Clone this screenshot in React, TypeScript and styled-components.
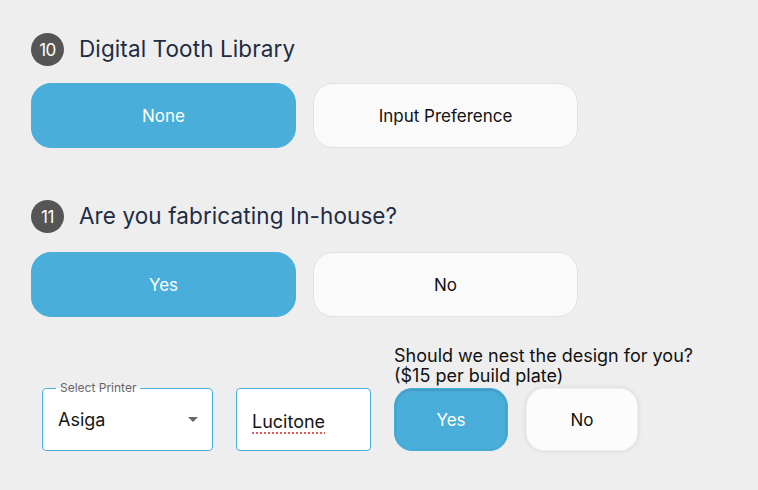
import React from "react";
import styled, { createGlobalStyle } from "styled-components";

const Global = createGlobalStyle`
  html, body { margin: 0; padding: 0; background: #eeeeee; }
  body { font-family: Inter, "Noto Sans", sans-serif; }
  * { box-sizing: border-box; }
`;

const Page = styled.div`
  width: 758px;
  height: 490px;
  background: #eeeeee;
  padding: 33px 0 0 31px;
  display: flex;
  flex-direction: column;
`;

const Section = styled.section<{ $gapTop?: number; $inner: number }>`
  display: flex;
  flex-direction: column;
  gap: ${(p) => p.$inner}px;
  margin-top: ${(p) => p.$gapTop ?? 0}px;
`;

const Heading = styled.div`
  display: flex;
  align-items: center;
  gap: 15px;
  height: 33px;
`;

const Badge = styled.span`
  width: 33px;
  height: 33px;
  border-radius: 50%;
  background: #555555;
  color: #ffffff;
  font-size: 17px;
  display: flex;
  align-items: center;
  justify-content: center;
  letter-spacing: -0.5px;
`;

const Title = styled.h2`
  margin: 0 0 3px;
  font-size: 22.5px;
  font-weight: 400;
  color: #1e2c44;
  letter-spacing: 0.1px;
`;

const Choices = styled.div<{ $gap: number }>`
  display: flex;
  gap: ${(p) => p.$gap}px;
`;

const Choice = styled.button<{ $active?: boolean; $w: number; $h: number; $r: number; $small?: boolean }>`
  width: ${(p) => p.$w}px;
  height: ${(p) => p.$h}px;
  border-radius: ${(p) => p.$r}px;
  font-family: Inter, "Noto Sans", sans-serif;
  font-size: 17px;
  cursor: pointer;
  background: ${(p) => (p.$active ? "#49aed9" : "#fafafa")};
  color: ${(p) => (p.$active ? "#ffffff" : "#111111")};
  border: 1px solid ${(p) => (p.$active ? "#49aed9" : "#e2e2e2")};
  box-shadow: ${(p) =>
    p.$small
      ? p.$active
        ? "inset 0 1px 3px rgba(0,0,0,0.18)"
        : "0 0 5px rgba(0,0,0,0.10)"
      : "none"};
  ${(p) => (p.$small && !p.$active ? "border-color: #f0f0f0; background: #fcfcfc;" : "")}
`;

const BottomRow = styled.div`
  display: flex;
  align-items: flex-end;
  margin-top: 29px;
  padding-left: 11px;
`;

const Field = styled.fieldset<{ $w: number }>`
  margin: 0;
  width: ${(p) => p.$w}px;
  height: 69px;
  border: 1px solid #49aed9;
  border-radius: 4px;
  background: #ffffff;
  padding: 0 14px 0 15px;
  display: flex;
  align-items: center;
  justify-content: space-between;
  min-inline-size: 0;
`;

const Legend = styled.legend`
  font-size: 12px;
  color: #666666;
  padding: 0 4px;
  margin-left: -2px;
  line-height: 12px;
`;

const PlainBox = styled.div<{ $w: number }>`
  width: ${(p) => p.$w}px;
  height: 63px;
  border: 1px solid #49aed9;
  border-radius: 4px;
  background: #ffffff;
  display: flex;
  align-items: center;
  padding: 0 15px;
`;

const Value = styled.span<{ $spell?: boolean }>`
  font-size: 18px;
  color: #151515;
  margin-top: ${(p) => (p.$spell ? 4 : -6)}px;
  ${(p) =>
    p.$spell
      ? "text-decoration: underline dotted #e05a5a; text-underline-offset: 4px; text-decoration-thickness: 2px;"
      : ""}
`;

const Caret = styled.span`
  width: 0;
  height: 0;
  border-left: 5px solid transparent;
  border-right: 5px solid transparent;
  border-top: 5px solid #666666;
  margin-top: -5px;
`;

const Gap = styled.div<{ $w: number }>`
  width: ${(p) => p.$w}px;
  flex: none;
`;

const Nest = styled.div`
  display: flex;
  flex-direction: column;
  gap: 2px;
`;

const Question = styled.p`
  margin: 0;
  font-size: 18px;
  line-height: 20px;
  color: #111111;
  white-space: nowrap;
`;

export default function App() {
  return (
    <>
      <Global />
      <Page>
        <Section $inner={17}>
          <Heading>
            <Badge>10</Badge>
            <Title>Digital Tooth Library</Title>
          </Heading>
          <Choices $gap={17}>
            <Choice $active $w={265} $h={65} $r={20}>None</Choice>
            <Choice $w={265} $h={65} $r={20}>Input Preference</Choice>
          </Choices>
        </Section>

        <Section $gapTop={52} $inner={19}>
          <Heading>
            <Badge>11</Badge>
            <Title>Are you fabricating In-house?</Title>
          </Heading>
          <Choices $gap={17}>
            <Choice $active $w={265} $h={65} $r={20}>Yes</Choice>
            <Choice $w={265} $h={65} $r={20}>No</Choice>
          </Choices>
        </Section>

        <BottomRow>
          <Field $w={171}>
            <Legend>Select Printer</Legend>
            <Value>Asiga</Value>
            <Caret />
          </Field>
          <Gap $w={23} />
          <PlainBox $w={135}>
            <Value $spell>Lucitone</Value>
          </PlainBox>
          <Gap $w={23} />
          <Nest>
            <Question>
              Should we nest the design for you?
              <br />($15 per build plate)
            </Question>
            <Choices $gap={18}>
              <Choice $active $small $w={114} $h={63} $r={18}>Yes</Choice>
              <Choice $small $w={112} $h={63} $r={18}>No</Choice>
            </Choices>
          </Nest>
        </BottomRow>
      </Page>
    </>
  );
}
